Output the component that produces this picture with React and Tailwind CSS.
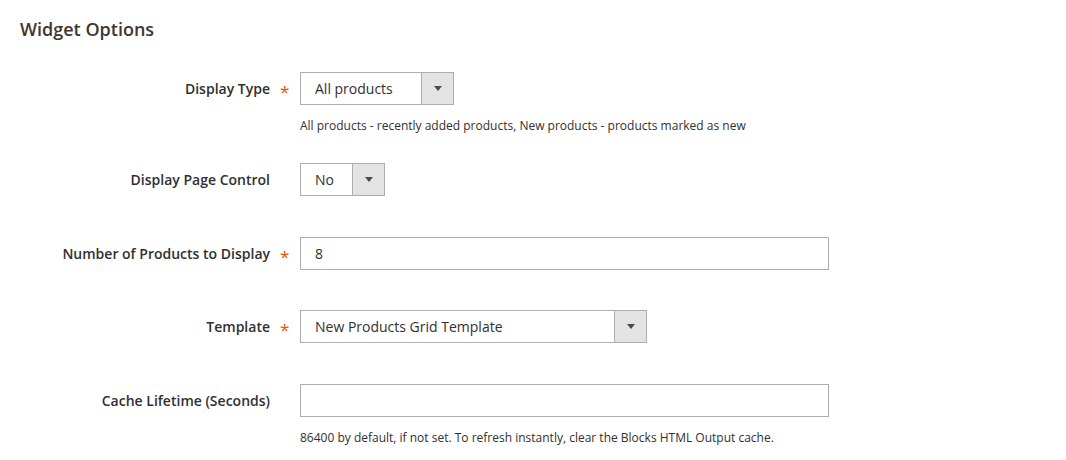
import React from "react";

const font = { fontFamily: '"Open Sans", "Noto Sans", sans-serif' };

function Arrow() {
  return (
    <svg width="8" height="5" viewBox="0 0 8 5" className="block">
      <path d="M0 0 H8 L4 5 Z" fill="#514943" />
    </svg>
  );
}

function Select({ value, width }) {
  return (
    <div
      className={`flex h-[33px] border border-[#adadad] bg-white ${width}`}
    >
      <div className="flex-1 pl-[14px] text-[14px] leading-[31px] text-[#303030] whitespace-nowrap">
        {value}
      </div>
      <div className="flex w-[32px] items-center justify-center border-l border-[#adadad] bg-[#e3e3e3]">
        <Arrow />
      </div>
    </div>
  );
}

function Input({ value }) {
  return (
    <div className="h-[33px] w-[529px] border border-[#adadad] bg-white pl-[14px] text-[14px] leading-[31px] text-[#303030]">
      {value}
    </div>
  );
}

function Row({ label, required, children, note, className }) {
  return (
    <div className={`flex items-start ${className}`}>
      <div className="w-[270px] text-right text-[14px] font-semibold leading-[33px] text-[#303030]">
        {label}
      </div>
      <div className="w-[30px] pl-[10px] text-[17px] leading-[33px] text-[#eb5202]">
        {required ? <span className="inline-block translate-y-[3px]">*</span> : null}
      </div>
      <div className="flex flex-col">
        {children}
        {note ? (
          <div className="mt-[12px] text-[12px] leading-[18px] text-[#303030]">
            {note}
          </div>
        ) : null}
      </div>
    </div>
  );
}

export default function App() {
  return (
    <div className="min-h-[460px] bg-white pl-[20px] pt-[17px]" style={font}>
      <h2 className="mb-[31px] text-[18px] font-semibold leading-[24px] text-[#41362f]">
        Widget Options
      </h2>
      <div className="-ml-[20px]">
        <Row
          label="Display Type"
          required
          note="All products - recently added products, New products - products marked as new"
          className="mb-[28px]"
        >
          <Select value="All products" width="w-[154px]" />
        </Row>
        <Row label="Display Page Control" className="mb-[41px]">
          <Select value="No" width="w-[85px]" />
        </Row>
        <Row label="Number of Products to Display" required className="mb-[40px]">
          <Input value="8" />
        </Row>
        <Row label="Template" required className="mb-[41px]">
          <Select value="New Products Grid Template" width="w-[347px]" />
        </Row>
        <Row
          label="Cache Lifetime (Seconds)"
          note="86400 by default, if not set. To refresh instantly, clear the Blocks HTML Output cache."
        >
          <Input value="" />
        </Row>
      </div>
    </div>
  );
}
